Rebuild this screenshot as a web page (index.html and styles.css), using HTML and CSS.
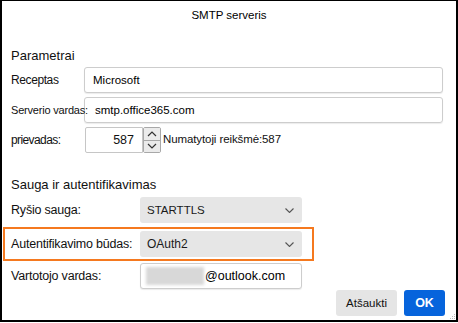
FILE: index.html
```html
<!DOCTYPE html>
<html lang="lt">
<head>
    <meta charset="UTF-8">
    <title>SMTP serveris</title>
    <link rel="stylesheet" href="styles.css">
</head>
<body>
<div class="dialog">
    <div class="title">SMTP serveris</div>
    <div class="content">
        <div class="group-title">Parametrai</div>
        <div class="row">
            <span class="label">Receptas</span>
            <div class="field wide">Microsoft</div>
        </div>
        <div class="row server">
            <span class="label">Serverio vardas:</span>
            <div class="field wide">smtp.office365.com</div>
        </div>
        <div class="row">
            <span class="label port">prievadas:</span>
            <div class="spin">
                <span class="spin-value">587</span>
                <span class="spin-btns">
                    <span class="spin-btn">
                        <svg width="10" height="6" viewBox="0 0 10 6"><polyline points="1,5 5,1 9,5" fill="none" stroke="#333" stroke-width="1.2"/></svg>
                    </span>
                    <span class="spin-btn">
                        <svg width="10" height="6" viewBox="0 0 10 6"><polyline points="1,1 5,5 9,1" fill="none" stroke="#333" stroke-width="1.2"/></svg>
                    </span>
                </span>
            </div>
            <span class="hint">Numatytoji reikšmė:587</span>
        </div>

        <div class="group-title second">Sauga ir autentifikavimas</div>
        <div class="row">
            <span class="label big">Ryšio sauga:</span>
            <div class="select"><span class="sel-text caps">STARTTLS</span>
                <svg width="9" height="5" viewBox="0 0 9 5"><polyline points="0.5,0.5 4.5,4.5 8.5,0.5" fill="none" stroke="#555" stroke-width="1.1"/></svg>
            </div>
        </div>
        <div class="row highlight">
            <span class="label big">Autentifikavimo būdas:</span>
            <div class="select"><span class="sel-text">OAuth2</span>
                <svg width="9" height="5" viewBox="0 0 9 5"><polyline points="0.5,0.5 4.5,4.5 8.5,0.5" fill="none" stroke="#555" stroke-width="1.1"/></svg>
            </div>
        </div>
        <div class="row user">
            <span class="label big">Vartotojo vardas:</span>
            <div class="field narrow"><span class="blur"></span>@outlook.com</div>
        </div>
    </div>
    <div class="actions">
        <button class="btn">Atšaukti</button>
        <button class="btn primary">OK</button>
    </div>
    <svg class="grip" width="7" height="7" viewBox="0 0 7 7">
        <rect x="5" y="1" width="1" height="1" fill="#bbb"/>
        <rect x="3" y="3" width="1" height="1" fill="#bbb"/>
        <rect x="5" y="3" width="1" height="1" fill="#bbb"/>
        <rect x="1" y="5" width="1" height="1" fill="#bbb"/>
        <rect x="3" y="5" width="1" height="1" fill="#bbb"/>
        <rect x="5" y="5" width="1" height="1" fill="#bbb"/>
    </svg>
</div>
</body>
</html>
```

FILE: styles.css
```css
* {
    box-sizing: border-box;
}

body {
    margin: 0;
    background: #fff;
    font-family: "Liberation Sans", Arial, sans-serif;
    color: #111;
}

.dialog {
    position: relative;
    width: 458px;
    height: 322px;
    border: 2px solid #000;
    border-top-width: 1px;
    background: #fff;
    display: flex;
    flex-direction: column;
}

.title {
    height: 29px;
    line-height: 29px;
    text-align: center;
    font-size: 11.5px;
    color: #000;
}

.content {
    padding: 18px 13px 0 9px;
}

.group-title {
    height: 16px;
    line-height: 16px;
    font-size: 13px;
    color: #111;
    margin-bottom: 3px;
}

.group-title.second {
    margin-top: 24px;
    margin-bottom: 4px;
}

.row {
    display: flex;
    align-items: center;
    height: 26px;
    margin-bottom: 4px;
}

.label {
    width: 73px;
    flex-shrink: 0;
    font-size: 12px;
    letter-spacing: -0.4px;
    white-space: nowrap;
}

.label.port {
    width: 74px;
    letter-spacing: -0.6px;
}

.label.big {
    width: 129px;
    font-size: 12.5px;
    letter-spacing: -0.2px;
}

.field {
    height: 26px;
    display: flex;
    align-items: center;
    padding-left: 8px;
    border: 1px solid #cdcdcd;
    border-radius: 3px;
    box-shadow: 0 1px 1px rgba(0, 0, 0, 0.08);
    font-size: 11.5px;
    color: #000;
    background: #fff;
}

.field.wide {
    flex: 1;
}

.server .label {
    font-size: 11px;
    letter-spacing: -0.2px;
    position: relative;
    z-index: 1;
}

.server .field {
    background: transparent;
    padding-left: 10px;
    font-size: 11.5px;
}

.spin {
    display: flex;
    height: 26px;
}

.spin-value {
    width: 58px;
    height: 26px;
    border: 1px solid #c6c6c6;
    border-radius: 2px 0 0 2px;
    text-align: right;
    padding-right: 8px;
    line-height: 24px;
    font-size: 12.5px;
}

.spin-btns {
    display: flex;
    flex-direction: column;
    width: 18px;
    border: 1px solid #a8a8a8;
    border-radius: 2px;
}

.spin-btn {
    flex: 1;
    display: flex;
    align-items: center;
    justify-content: center;
    background: #ebebeb;
}

.spin-btn + .spin-btn {
    border-top: 1px solid #a8a8a8;
}

.hint {
    margin-left: 2px;
    font-size: 11.5px;
    letter-spacing: -0.1px;
    margin-top: -2px;
}

.select {
    width: 162px;
    height: 26px;
    display: flex;
    align-items: center;
    justify-content: space-between;
    padding: 0 8px 0 7px;
    background: #e6e6e6;
    border-radius: 3px;
}

.sel-text {
    font-size: 12px;
    color: #1a1a1a;
}

.sel-text.caps {
    font-size: 11.5px;
}

.row.highlight {
    height: 34px;
    margin: 3px 0 2px -8px;
    width: 311px;
    padding: 2px 10px 2px 6px;
    border: 2px solid #f5791f;
}

.row.user {
    margin-bottom: 0;
}

.field.narrow {
    width: 162px;
    padding-left: 5px;
    font-size: 12.5px;
}

.blur {
    width: 58px;
    height: 18px;
    margin-right: 1px;
    background: #d8d8d8;
    filter: blur(1.5px);
}

.actions {
    display: flex;
    justify-content: flex-end;
    gap: 7px;
    padding: 1px 11px 0 0;
}

.btn {
    height: 26px;
    border: 0;
    border-radius: 3px;
    padding: 0;
    font-family: "Liberation Sans", Arial, sans-serif;
    font-size: 11.5px;
    color: #111;
    background: #e5e5e5;
    width: 61px;
}

.btn.primary {
    width: 41px;
    background: #0664dc;
    color: #fff;
    font-weight: 700;
    font-size: 12.5px;
}

.grip {
    position: absolute;
    right: 0;
    bottom: 0;
}
```
